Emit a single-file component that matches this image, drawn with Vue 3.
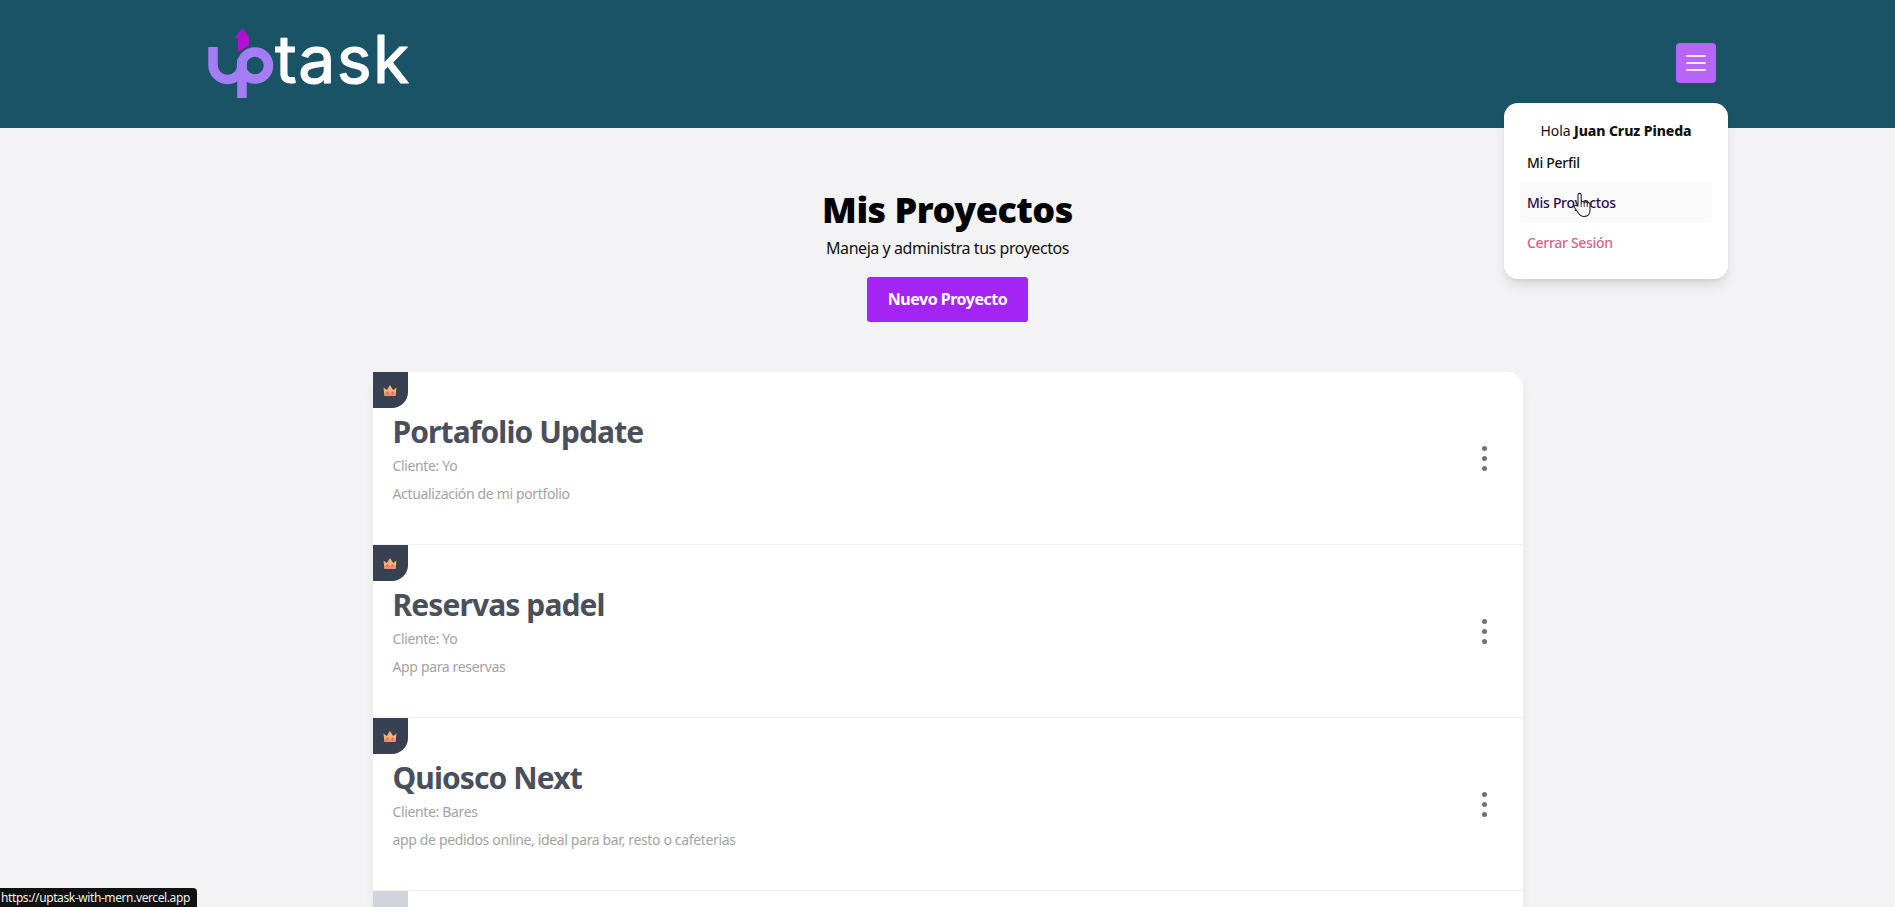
<script setup>
const projects = [
  { name: 'Portafolio Update', client: 'Yo', desc: 'Actualización de mi portfolio' },
  { name: 'Reservas padel', client: 'Yo', desc: 'App para reservas' },
  { name: 'Quiosco Next', client: 'Bares', desc: 'app de pedidos online, ideal para bar, resto o cafeterias' },
]
</script>

<template>
  <div class="page">
    <header class="header">
      <div class="header-inner">
        <svg class="logo" width="210" height="100" viewBox="205 10 210 100" role="img" aria-label="UpTask">
          <path d="M213 48 V66 A14.5 14.5 0 0 0 242 66" fill="none" stroke="#a47cf3" stroke-width="9.5" />
          <circle cx="255" cy="66.5" r="13.5" fill="none" stroke="#a47cf3" stroke-width="9.5" />
          <path d="M242 60 V99" fill="none" stroke="#a47cf3" stroke-width="9.5" />
          <path d="M242 29 L249 38 L249 46 L238 53 L238 39 L235 39 Z" fill="#b50fd6" />
          <text x="275" y="84" class="logo-text">task</text>
        </svg>
        <button class="burger" aria-label="Menu">
          <span></span><span></span><span></span>
        </button>
      </div>

      <div class="menu">
        <p class="hello">Hola <strong>Juan Cruz Pineda</strong></p>
        <a class="menu-item">Mi Perfil</a>
        <a class="menu-item active">Mis Proyectos</a>
        <a class="menu-item logout">Cerrar Sesión</a>
        <svg class="cursor" width="20" height="26" viewBox="0 0 20 26">
          <path d="M6 14 V3 a1.6 1.6 0 0 1 3.2 0 V11 a1.5 1.5 0 0 1 3 0 a1.5 1.5 0 0 1 3 .8 a1.4 1.4 0 0 1 2.8 .8 V18 c0 4 -2.5 6.5 -6 6.5 c-3 0 -4.5 -1.5 -6 -4 L2.5 15.5 c-1 -2 1.5 -3 2.6 -1.5 Z" fill="#fff" stroke="#222" stroke-width="1.1" stroke-linejoin="round" />
          <path d="M9.2 11 V15 M12.2 11 V15 M15.2 12 V15" stroke="#222" stroke-width=".9" fill="none" />
        </svg>
      </div>
    </header>

    <main class="main">
      <h1 class="title">Mis Proyectos</h1>
      <p class="subtitle">Maneja y administra tus proyectos</p>
      <div class="actions">
        <a class="new-btn">Nuevo Proyecto</a>
      </div>

      <ul class="list">
        <li v-for="p in projects" :key="p.name" class="row">
          <span class="badge">
            <svg width="14" height="13" viewBox="0 0 14 13">
              <path d="M0.5 3.5 L3.8 6 L7 1 L10.2 6 L13.5 3.5 L12.5 12 H1.5 Z" fill="#f5b26b" />
              <rect x="1.5" y="9" width="11" height="3" fill="#ea8f77" />
              <circle cx="4.5" cy="8.6" r="1.2" fill="#dc5f84" />
              <circle cx="9.5" cy="8.6" r="1.2" fill="#dc5f84" />
            </svg>
          </span>
          <div class="info">
            <h2 class="name">{{ p.name }}</h2>
            <p class="meta">Cliente: {{ p.client }}</p>
            <p class="meta">{{ p.desc }}</p>
          </div>
          <div class="dots"><i></i><i></i><i></i></div>
        </li>
        <li class="row">
          <span class="badge light"></span>
        </li>
      </ul>
    </main>

    <div class="status">https://uptask-with-mern.vercel.app</div>
  </div>
</template>

<style>
body {
  margin: 0;
  background: #f3f3f6;
}
</style>

<style scoped>
.page {
  height: 907px;
  overflow: hidden;
  position: relative;
  background: #f3f3f6;
  font-family: "Noto Sans", "Open Sans", sans-serif;
  color: #111;
}

.header {
  height: 128px;
  background: #1a5366;
  position: relative;
}

.header-inner {
  display: flex;
  align-items: center;
  justify-content: space-between;
  box-sizing: border-box;
  height: 128px;
  padding: 0 179px 3px 205px;
}

.logo {
  display: block;
  align-self: flex-start;
  margin-top: 9px;
}

.logo-text {
  font-family: Inter, sans-serif;
  font-size: 66px;
  font-weight: 400;
  letter-spacing: 1.4px;
  fill: #fff;
  stroke: #fff;
  stroke-width: 1.2px;
  stroke-linejoin: round;
}

.burger {
  width: 40px;
  height: 40px;
  padding: 0;
  border: none;
  border-radius: 4px;
  background: #b964f8;
  display: flex;
  flex-direction: column;
  align-items: center;
  justify-content: center;
  gap: 5px;
}

.burger span {
  display: block;
  width: 20px;
  height: 2px;
  border-radius: 1px;
  background: #f6e8ff;
}

.menu {
  position: absolute;
  top: 103px;
  left: 1504px;
  width: 224px;
  height: 176px;
  box-sizing: border-box;
  padding: 18px 16px 0;
  background: #fff;
  border-radius: 14px;
  box-shadow: 0 8px 14px -3px rgba(0, 0, 0, .12), 0 3px 5px -2px rgba(0, 0, 0, .08);
  font-size: 14px;
  z-index: 5;
}

.hello {
  margin: 0 0 2px;
  text-align: center;
  line-height: 20px;
  letter-spacing: -0.1px;
}

.hello strong {
  font-weight: 800;
}

.menu-item {
  display: block;
  height: 40px;
  line-height: 40px;
  padding-left: 7px;
  border-radius: 3px;
  font-weight: 500;
  letter-spacing: -0.3px;
}

.menu-item.active {
  background: #fafafa;
  color: #2e0a4a;
}

.menu-item.logout {
  color: #d0668c;
}

.cursor {
  position: absolute;
  top: 89px;
  left: 68px;
}

.main {
  padding-top: 62px;
}

.title {
  margin: 0;
  text-align: center;
  font-size: 36px;
  line-height: 40px;
  font-weight: 900;
  letter-spacing: -0.5px;
  color: #000;
}

.subtitle {
  margin: 6px 0 0;
  text-align: center;
  font-size: 16px;
  line-height: 24px;
  letter-spacing: -0.45px;
}

.actions {
  display: flex;
  justify-content: center;
  margin-top: 17px;
}

.new-btn {
  display: block;
  width: 161px;
  height: 45px;
  line-height: 45px;
  text-align: center;
  border-radius: 3px;
  background: #a425f3;
  color: #fff;
  font-size: 16px;
  font-weight: 700;
  letter-spacing: -0.5px;
}

.list {
  list-style: none;
  width: 1150px;
  margin: 50px auto 0;
  padding: 0;
  background: #fff;
  border-radius: 16px 16px 0 0;
  box-shadow: 0 8px 14px -3px rgba(0, 0, 0, .08);
}

.row {
  position: relative;
  height: 173px;
  box-sizing: border-box;
  display: flex;
  align-items: flex-start;
  justify-content: space-between;
  padding: 36px 36px 0 20px;
  border-bottom: 1px solid #f0f1f3;
}

.badge {
  position: absolute;
  top: 0;
  left: 0;
  width: 35px;
  height: 36px;
  display: flex;
  align-items: center;
  justify-content: center;
  background: #374151;
  border-bottom-right-radius: 16px;
}

.badge.light {
  background: #d1d5db;
}

.name {
  margin: 0;
  font-size: 30px;
  line-height: 48px;
  font-weight: 700;
  letter-spacing: -0.9px;
  color: #4b4f5a;
}

.meta {
  margin: 0 0 8px;
  font-size: 14px;
  line-height: 20px;
  letter-spacing: -0.35px;
  color: #a3a3a3;
}

.dots {
  display: flex;
  flex-direction: column;
  gap: 5px;
  margin-top: 38px;
}

.dots i {
  display: block;
  width: 5px;
  height: 5px;
  border-radius: 50%;
  background: #6f7176;
}

.status {
  position: absolute;
  left: 0;
  bottom: 0;
  height: 19px;
  line-height: 20px;
  padding: 0 7px 0 1px;
  background: #111;
  color: #eee;
  font-size: 12px;
  letter-spacing: -0.4px;
  border-top-right-radius: 4px;
}
</style>
